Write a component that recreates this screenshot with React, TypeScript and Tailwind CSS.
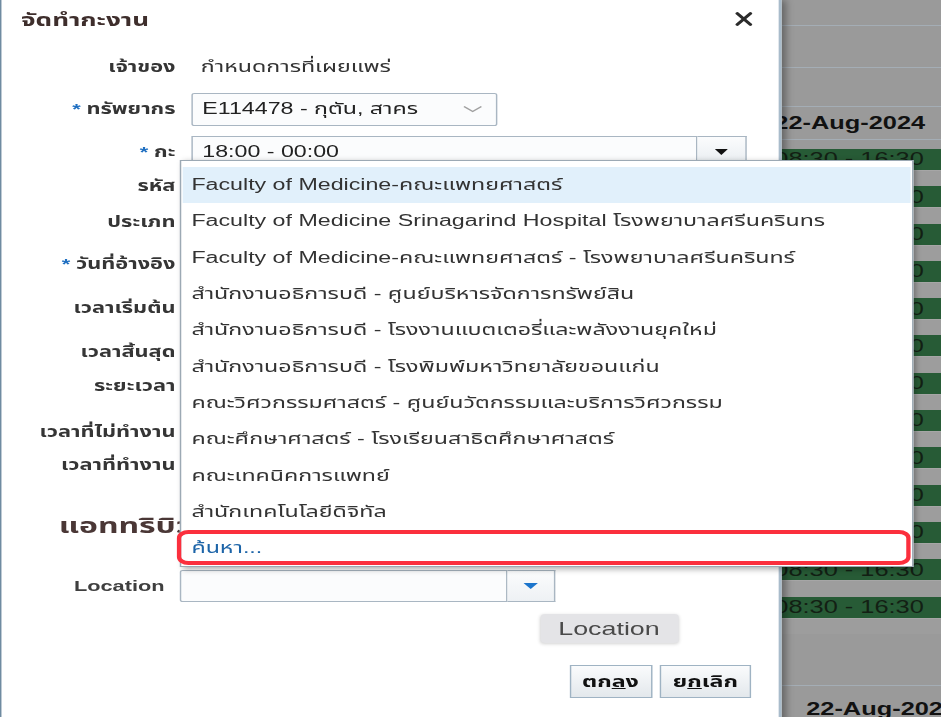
import React from "react";

const rows: { label: string; star?: boolean; h: string; kind?: string }[] = [
  { label: "เจ้าของ", h: "h-[42px]", kind: "owner" },
  { label: "ทรัพยากร", star: true, h: "h-[43px]", kind: "resource" },
  { label: "กะ", star: true, h: "h-[34px]", kind: "shift" },
  { label: "รหัส", h: "h-[36px]" },
  { label: "ประเภท", h: "h-[42px]" },
  { label: "วันที่อ้างอิง", star: true, h: "h-[44px]" },
  { label: "เวลาเริ่มต้น", h: "h-[44px]" },
  { label: "เวลาสิ้นสุด", h: "h-[34px]" },
  { label: "ระยะเวลา", h: "h-[46px]" },
  { label: "เวลาที่ไม่ทำงาน", h: "h-[33px]" },
  { label: "เวลาที่ทำงาน", h: "h-[32px]" },
];

const items = [
  "Faculty of Medicine-คณะแพทยศาสตร์",
  "Faculty of Medicine Srinagarind Hospital โรงพยาบาลศรีนครินทร",
  "Faculty of Medicine-คณะแพทยศาสตร์ - โรงพยาบาลศรีนครินทร์",
  "สำนักงานอธิการบดี - ศูนย์บริหารจัดการทรัพย์สิน",
  "สำนักงานอธิการบดี - โรงงานแบตเตอรี่และพลังงานยุคใหม่",
  "สำนักงานอธิการบดี - โรงพิมพ์มหาวิทยาลัยขอนแก่น",
  "คณะวิศวกรรมศาสตร์ - ศูนย์นวัตกรรมและบริการวิศวกรรม",
  "คณะศึกษาศาสตร์ - โรงเรียนสาธิตศึกษาศาสตร์",
  "คณะเทคนิคการแพทย์",
  "สำนักเทคโนโลยีดิจิทัล",
];

const bars = Array.from({ length: 13 }, (_, i) => i);

function Row({ r }: { r: (typeof rows)[number] }) {
  return (
    <div className={`${r.h} flex items-start shrink-0`}>
      <div className="w-[120px] h-[32px] flex items-center justify-end whitespace-nowrap text-[15px] font-bold text-[#353535]">
        {r.star && <span className="text-[#1f6fc1] mr-[4px]">*</span>}
        {r.label}
      </div>
      {r.kind === "owner" && (
        <div className="ml-[17.5px] h-[32px] flex items-center text-[16px] text-[#333] whitespace-nowrap">
          กำหนดการที่เผยแพร่
        </div>
      )}
      {r.kind === "resource" && (
        <div className="ml-[11px] w-[211px] h-[33px] -mt-[0.5px] flex items-center justify-between border border-[#a9b6c2] rounded-[2px] bg-[#fbfcfd] pl-[6.5px] pr-[9px]">
          <span className="text-[16px] text-[#222] whitespace-nowrap">E114478 - กุตัน, สาคร</span>
          <svg width="14" height="8" viewBox="0 0 14 8">
            <path d="M1 1.5 L7 6.5 L13 1.5" fill="none" stroke="#a0a0a0" strokeWidth="1.2" />
          </svg>
        </div>
      )}
      {r.kind === "shift" && (
        <div className="ml-[11px] flex h-[33px] -mt-[0.5px]">
          <div className="w-[349px] h-full flex items-center border border-[#a9b6c2] bg-[#fbfcfd] pl-[6.5px] text-[16px] text-[#222] whitespace-nowrap">
            18:00 - 00:00
          </div>
          <div className="w-[34px] h-full flex items-center justify-center border border-l-0 border-[#a9b6c2] bg-gradient-to-b from-[#fbfcfd] to-[#e6ebef]">
            <svg width="9" height="6" viewBox="0 0 9 6">
              <path d="M0 0 L9 0 L4.5 6 Z" fill="#111" />
            </svg>
          </div>
        </div>
      )}
    </div>
  );
}

export default function App() {
  return (
    <div className="w-[941px] h-[717px] overflow-hidden bg-[#9a9a9a] font-['Liberation_Sans','Noto_Sans_Thai','Noto_Sans',sans-serif]">
      <div className="relative w-[649px] h-[717px] origin-top-left scale-x-[1.45] flex">
        {/* Dialog */}
        <div className="relative z-10 w-[539px] h-[760px] shrink-0 bg-white border-l-[1.5px] border-l-[#6f8ba1] border-r-2 border-r-[#a9bccb] shadow-[3px_0_6px_rgba(0,0,0,0.35)] flex flex-col">
          <div className="h-[40px] flex items-center justify-between pl-[13.5px] pr-[18px] shrink-0">
            <span className="text-[18px] font-bold text-[#3e2e2c] whitespace-nowrap">จัดทำกะงาน</span>
            <svg width="12" height="14" viewBox="0 0 12 14" className="mt-[-2px]">
              <path d="M1.5 1.5 L10.5 12.5 M10.5 1.5 L1.5 12.5" stroke="#2b2b2b" strokeWidth="2.6" strokeLinecap="round" />
            </svg>
          </div>
          <div className="h-[11px] shrink-0" />
          {rows.map((r) => (
            <Row key={r.label} r={r} />
          ))}
          <div className="mt-[28px] h-[32px] flex items-center pl-[39.5px] text-[22px] font-bold text-[#4a3736] whitespace-nowrap shrink-0">
            แอททริบิวต์
          </div>
          <div className="mt-[29px] h-[32px] flex items-center shrink-0">
            <div className="w-[112.5px] text-right text-[15px] font-bold text-[#3f3f3f]">Location</div>
            <div className="ml-[10px] w-[226px] h-full border border-[#a9b6c2] bg-[#fbfcfd] rounded-l-[2px]" />
            <div className="w-[33px] h-full flex items-center justify-center border border-l-0 border-[#a9b6c2] bg-gradient-to-b from-[#fbfcfd] to-[#eef1f4]">
              <svg width="10" height="6" viewBox="0 0 10 6">
                <path d="M0 0 L10 0 L5 6 Z" fill="#1c75cc" />
              </svg>
            </div>
          </div>
          <div className="mt-[12px] h-[29px] ml-[371.5px] w-[95px] flex items-center justify-center rounded-[3px] bg-[#e4e4e7] shadow-[0_1px_3px_rgba(0,0,0,0.18)] text-[18.5px] text-[#4a4a4a] shrink-0">
            Location
          </div>
          <div className="mt-[22px] flex justify-end gap-[5.5px] pr-[19px] shrink-0">
            <button className="w-[57px] h-[33px] border border-[#9fb3c3] bg-gradient-to-b from-[#fafbfc] to-[#e3e8ec] text-[16px] font-bold text-[#111]">
              ตก<span className="underline">ล</span>ง
            </button>
            <button className="w-[63px] h-[33px] border border-[#9fb3c3] bg-gradient-to-b from-[#fafbfc] to-[#e3e8ec] text-[16px] font-bold text-[#111]">
              ย<span className="underline">ก</span>เลิก
            </button>
          </div>
        </div>

        {/* Background calendar */}
        <div className="flex-1 overflow-hidden flex flex-col bg-[#9a9a9a]">
          <div className="h-[26px] border-b border-[#a4adb5] shrink-0" />
          <div className="h-[42px] border-b border-[#a4adb5] shrink-0" />
          <div className="h-[39px] border-b border-[#a4adb5] shrink-0" />
          <div className="h-[33px] flex items-center -ml-[5px] border-b border-[#a4adb5] text-[17.5px] font-bold text-[#111] whitespace-nowrap shrink-0">
            22-Aug-2024
          </div>
          <div className="h-[9px] shrink-0" />
          {bars.map((b) => (
            <div key={b} className="shrink-0">
              <div className="h-[21px] bg-[#275b36] flex items-center -ml-[5px] text-[17.5px] text-[#132014] whitespace-nowrap">
                08:30 - 16:30
              </div>
              <div className="h-[16.3px] bg-[#9d9d9d] border-t border-[#a6a6a6]" />
            </div>
          ))}
          <div className="h-[52px] border-b border-[#a4adb5] shrink-0" />
          <div className="h-[36px] flex items-end pl-[17px] text-[17.5px] font-bold text-[#111] whitespace-nowrap shrink-0">
            22-Aug-2024
          </div>
        </div>

        {/* Dropdown list */}
        <div className="absolute z-20 left-[124px] top-[160px] w-[506px] bg-white border border-[#9ca9b4] shadow-[2px_2px_5px_rgba(0,0,0,0.35)] px-[1px] pt-[6px] flex flex-col">
          {items.map((it, i) => (
            <div
              key={it}
              className={`h-[36.3px] flex items-center pl-[6px] text-[16px] text-[#333] whitespace-nowrap ${i === 0 ? "bg-[#e1f0fb]" : ""}`}
            >
              {it}
            </div>
          ))}
          <div className="h-[36.3px] flex items-center pl-[6px] text-[16px] text-[#1c64a8] whitespace-nowrap">ค้นหา...</div>
        </div>

        {/* Red annotation */}
        <div className="absolute z-30 left-[122px] top-[530px] w-[506px] h-[35px] border-y-4 border-x-[3px] border-[#fb2f3d] rounded-[8px]" />
      </div>
    </div>
  );
}
